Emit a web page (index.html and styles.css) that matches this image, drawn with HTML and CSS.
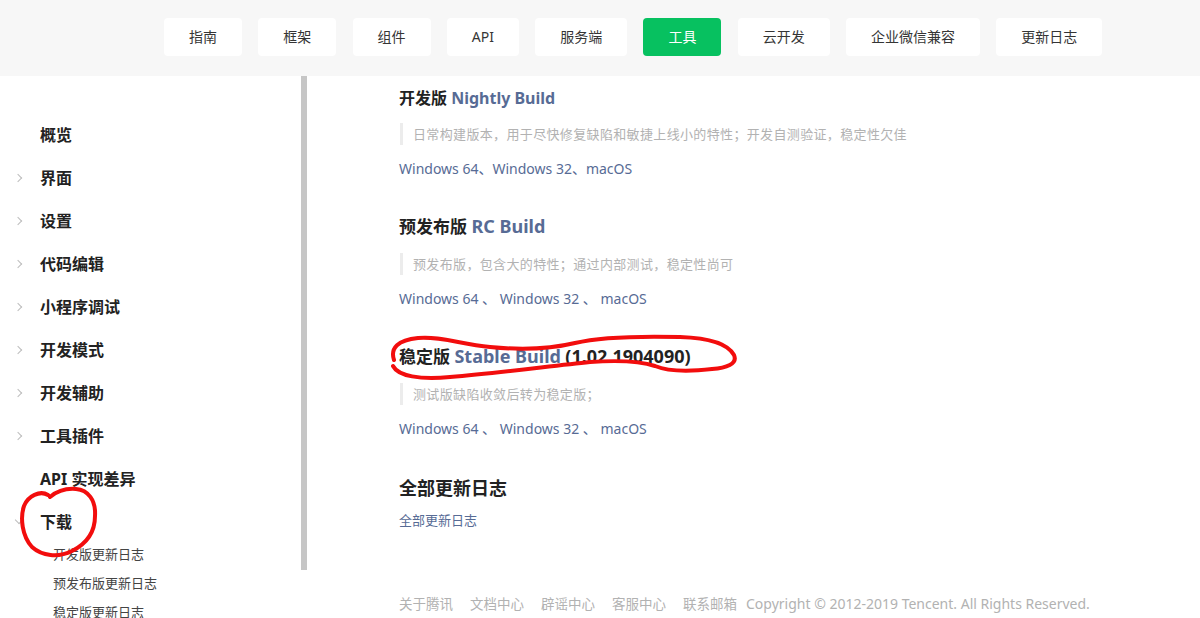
FILE: index.html
```html
<!DOCTYPE html>
<html lang="zh-CN">
<head>
    <meta charset="UTF-8">
    <meta name="viewport" content="width=device-width, initial-scale=1.0">
    <title>下载 · 小程序</title>
    <link rel="stylesheet" href="styles.css">
</head>
<body>

<header class="top-bar">
    <nav class="top-nav">
        <a class="nav-btn" href="#">指南</a>
        <a class="nav-btn" href="#">框架</a>
        <a class="nav-btn" href="#">组件</a>
        <a class="nav-btn" href="#">API</a>
        <a class="nav-btn" href="#">服务端</a>
        <a class="nav-btn active" href="#">工具</a>
        <a class="nav-btn" href="#">云开发</a>
        <a class="nav-btn" href="#">企业微信兼容</a>
        <a class="nav-btn" href="#">更新日志</a>
    </nav>
</header>

<div class="page">
    <aside class="sidebar">
        <ul class="side-menu">
            <li class="side-item">概览</li>
            <li class="side-item folder">界面</li>
            <li class="side-item folder">设置</li>
            <li class="side-item folder">代码编辑</li>
            <li class="side-item folder">小程序调试</li>
            <li class="side-item folder">开发模式</li>
            <li class="side-item folder">开发辅助</li>
            <li class="side-item folder">工具插件</li>
            <li class="side-item">API 实现差异</li>
            <li class="side-item folder open">下载</li>
            <li class="side-sub">开发版更新日志</li>
            <li class="side-sub">预发布版更新日志</li>
            <li class="side-sub">稳定版更新日志</li>
        </ul>
        <div class="scroll-thumb"></div>
    </aside>

    <main class="content">
        <section class="build">
            <h2 class="build-title small">开发版 <span class="en">Nightly Build</span></h2>
            <blockquote class="build-note">日常构建版本，用于尽快修复缺陷和敏捷上线小的特性；开发自测验证，稳定性欠佳</blockquote>
            <p class="build-links"><a href="#">Windows 64</a>、<a href="#">Windows 32</a>、<a href="#">macOS</a></p>
        </section>

        <section class="build">
            <h2 class="build-title">预发布版 <span class="en">RC Build</span></h2>
            <blockquote class="build-note">预发布版，包含大的特性；通过内部测试，稳定性尚可</blockquote>
            <p class="build-links"><a href="#">Windows 64</a> 、 <a href="#">Windows 32</a> 、 <a href="#">macOS</a></p>
        </section>

        <section class="build">
            <h2 class="build-title">稳定版 <span class="en">Stable Build</span> <span class="ver">(1.02.1904090)</span></h2>
            <blockquote class="build-note">测试版缺陷收敛后转为稳定版；</blockquote>
            <p class="build-links"><a href="#">Windows 64</a> 、 <a href="#">Windows 32</a> 、 <a href="#">macOS</a></p>
        </section>

        <section class="build last">
            <h2 class="build-title big">全部更新日志</h2>
            <p class="all-link"><a href="#">全部更新日志</a></p>
        </section>

        <footer class="footer">
            <a href="#">关于腾讯</a>
            <a href="#">文档中心</a>
            <a href="#">辟谣中心</a>
            <a href="#">客服中心</a>
            <a href="#">联系邮箱</a>
            <span>Copyright © 2012-2019 Tencent. All Rights Reserved.</span>
        </footer>
    </main>
</div>

<!-- hand drawn red marks on top of the screenshot -->
<svg class="marks" width="1200" height="618" viewBox="0 0 1200 618">
    <path d="M48 495 C40 490 28 496 24 506 C20 518 22 536 32 547 C42 556 58 558 72 551 C86 544 95 532 95 516 C96 500 88 490 76 489 C64 488 56 492 50 497"
          fill="none" stroke="#f20d0d" stroke-width="4" stroke-linecap="round"/>
    <path d="M394 360 C390 348 398 340 418 338 C440 336 460 344 490 347 C520 350 550 349 575 343 C600 337 640 336 680 337 C710 338 728 344 734 355 C738 364 726 368 712 369 C695 371 672 373 655 366 C640 361 620 360 590 362 C550 366 500 373 450 377 C420 380 398 376 393 366"
          fill="none" stroke="#f20d0d" stroke-width="4" stroke-linecap="round"/>
</svg>

</body>
</html>
```

FILE: styles.css
```css
body {
    margin: 0;
    padding: 0;
    background-color: #fff;
    font-family: "Noto Sans", "Noto Sans CJK SC", sans-serif;
    color: #222;
}
a {
    text-decoration: none;
    color: #576b95;
}
.top-bar {
    background-color: #f7f7f7;
    height: 76px;
    box-sizing: border-box;
    padding: 18px 0 0 164px;
}
.top-nav {
    display: flex;
    gap: 16.25px;
}
.nav-btn {
    display: block;
    height: 38px;
    line-height: 38px;
    padding: 0 25px;
    background-color: #fff;
    border-radius: 4px;
    color: #353535;
    font-size: 14px;
}
.nav-btn.active {
    background-color: #07c160;
    color: #fff;
}
.page {
    display: flex;
}
.sidebar {
    width: 308px;
    flex-shrink: 0;
    display: flex;
}
.side-menu {
    list-style: none;
    margin: 0;
    padding: 38px 0 0 0;
    width: 301px;
}
.side-item {
    position: relative;
    height: 43px;
    line-height: 43px;
    padding-left: 40px;
    font-size: 16px;
    font-weight: bold;
    color: #222;
}
.side-item.folder::before {
    content: "";
    position: absolute;
    left: 15px;
    top: 18px;
    width: 5px;
    height: 5px;
    border-top: 1px solid #bdbdbd;
    border-right: 1px solid #bdbdbd;
    transform: rotate(45deg);
}
.side-item.open::before {
    left: 16px;
    top: 16px;
    transform: rotate(135deg);
}
.side-sub {
    height: 29px;
    line-height: 29px;
    padding-left: 53px;
    font-size: 13px;
    color: #444;
}
.side-menu .side-sub:nth-child(11) {
    margin-top: -4px;
}
.scroll-thumb {
    width: 6px;
    height: 494px;
    background-color: #c6c6c6;
}
.content {
    flex: 1;
    padding: 11px 0 0 91px;
}
.build-title {
    margin: 0;
    height: 24px;
    font-size: 17px;
    line-height: 24px;
    color: #222;
}
.build-title .en,
.build-title .ver {
    font-size: 18px;
    line-height: 1;
}
.build-title .en {
    color: #576b95;
}
.build-title.small {
    height: 22px;
    font-size: 16px;
    line-height: 22px;
}
.build-title.small .en {
    font-size: 16px;
}
.build-title.big {
    font-size: 18px;
}
.build + .build {
    margin-top: 35px;
}
.build.last {
    margin-top: 36px;
}
.build-note {
    margin: 14px 0 0 1px;
    padding-left: 10px;
    border-left: 3px solid #ececec;
    font-size: 13px;
    line-height: 22px;
    letter-spacing: 0.35px;
    color: #b2b2b2;
}
.build-links {
    margin: 13px 0 0 0;
    font-size: 14px;
    line-height: 22px;
    color: #576b95;
}
.all-link {
    margin: 10px 0 0 0;
    font-size: 13px;
    line-height: 20px;
}
.footer {
    display: flex;
    gap: 17px;
    margin-top: 64px;
    font-size: 13.5px;
    line-height: 20px;
    color: #b2b2b2;
}
.footer a {
    color: #b2b2b2;
}
.footer span {
    margin-left: -8px;
    font-size: 14px;
}
.marks {
    position: absolute;
    left: 0;
    top: 0;
    pointer-events: none;
}
```
